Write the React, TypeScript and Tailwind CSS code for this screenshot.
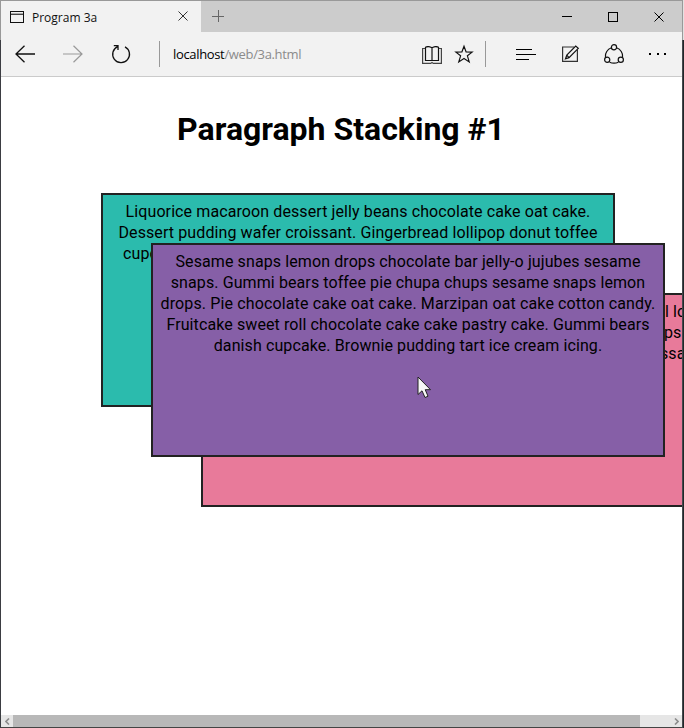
import React from "react";

function TabBar() {
  return (
    <div className="flex h-8 bg-[#cccccc] border-t border-[#999999]">
      <div className="flex w-[200px] items-center bg-[#f2f2f2]">
        <svg className="ml-[9px] shrink-0" width="14" height="12" shapeRendering="crispEdges" fill="none">
          <rect x="0.5" y="0.5" width="13" height="11" stroke="#111" />
          <path d="M1 2.5H13" stroke="#aaa" />
          <path d="M1 3.5H13" stroke="#444" />
        </svg>
        <span className="ml-2 mt-[2px] w-[146px] whitespace-nowrap font-['Open_Sans','Noto_Sans',sans-serif] text-[12px] leading-4 text-[#111]">
          Program 3a
        </span>
        <svg className="mb-px" width="10" height="10" stroke="#333" fill="none">
          <path d="M.5 .5L9.5 9.5M9.5 .5L.5 9.5" />
        </svg>
      </div>
      <div className="flex flex-1 items-center">
        <svg className="mb-px ml-[11px]" width="12" height="12" stroke="#666" fill="none" shapeRendering="crispEdges">
          <path d="M0 6.5H12M6.5 0V12" />
        </svg>
      </div>
      <div className="flex items-center">
        <svg className="mr-9" width="10" height="11" stroke="#000" shapeRendering="crispEdges">
          <path d="M0 5.5H10" />
        </svg>
        <svg className="mr-9" width="10" height="10" fill="none" stroke="#000" shapeRendering="crispEdges">
          <rect x=".5" y=".5" width="9" height="9" />
        </svg>
        <svg className="mr-[18px]" width="10" height="10" stroke="#000" fill="none">
          <path d="M.5 .5L9.5 9.5M9.5 .5L.5 9.5" />
        </svg>
      </div>
    </div>
  );
}

function Toolbar() {
  return (
    <div className="flex h-[45px] items-center border-b border-[#cbcbcb] bg-[#f2f2f2]">
      <svg className="ml-[14px]" width="20" height="18" fill="none" stroke="#111" strokeWidth="1.3">
        <path d="M20 9H1M9.5 .7L1 9L9.5 17.3" />
      </svg>
      <svg className="ml-7" width="20" height="18" fill="none" stroke="#999" strokeWidth="1.2">
        <path d="M0 9H19M10.5 .7L19 9L10.5 17.3" />
      </svg>
      <svg className="ml-7" width="20" height="20" fill="none" stroke="#111" strokeWidth="1.3">
        <path d="M14 2.8A8.4 8.4 0 1 1 6.600 2.600M2.800 1.700H7V5.900" />
      </svg>
      <div className="ml-7 h-[26px] w-px bg-[#999]" />
      <div className="ml-[13px] w-[249px] whitespace-nowrap font-['Open_Sans','Noto_Sans',sans-serif] text-[13px] leading-5 tracking-[-0.34px] text-black">
        localhost<span className="text-[#8b8b8b]">/web/3a.html</span>
      </div>
      <svg className="mt-px" width="20" height="18" fill="none" stroke="#111" strokeWidth="1.2">
        <path d="M10 1.800Q6.500 -.4 3.500 1.300V14.500H16.500V1.300Q13.500 -.4 10 1.800V14.500" />
        <path d="M3 2.500H.6V17.400H8.700L10 16.500L11.300 17.400H19.400V2.500H17" stroke="#444" />
      </svg>
      <svg className="ml-3" width="20" height="20" fill="none" stroke="#111" strokeWidth="1.2">
        <path d="M10 2.200L12.100 8L18.100 8.100L13.400 11.800L15.200 17.900L10 14.500L4.800 17.900L6.600 11.800L1.900 8.100L7.900 8Z" />
      </svg>
      <div className="ml-[11px] h-[26px] w-px bg-[#999]" />
      <svg className="mb-px ml-[30px]" width="20" height="12" fill="none" stroke="#000" shapeRendering="crispEdges">
        <path d="M0 1.500H16M0 6.500H20M0 11.500H13" />
      </svg>
      <svg className="ml-[26px]" width="18" height="18" fill="none" stroke="#111" strokeWidth="1.2">
        <path d="M12 2H.6V16.400H15.400V5" stroke="#333" />
        <path d="M3.500 13.700L4.800 10.200L13.700 1L16.300 3.300L7 12.600ZM4.800 10.200L7 12.600" />
      </svg>
      <svg className="ml-6" width="20" height="20" fill="none" stroke="#111" strokeWidth="1.2">
        <circle cx="10" cy="3.300" r="2.600" />
        <circle cx="3.200" cy="15.700" r="2.600" />
        <circle cx="16.800" cy="15.700" r="2.600" />
        <path d="M7.500 3.800A8.700 8.700 0 0 0 1.600 13.500M12.500 3.800A8.700 8.700 0 0 1 18.400 13.500M5.600 18.200Q10 20 14.400 18.200" />
      </svg>
      <svg className="ml-[25px]" width="18" height="2" fill="#000" shapeRendering="crispEdges">
        <path d="M0 0H2V2H0ZM8 0H10V2H8ZM15 0H17V2H15Z" />
      </svg>
    </div>
  );
}

const box = "absolute h-[214px] w-[514px] border-2 border-[#222] pt-[6px] text-center whitespace-nowrap";

function Page() {
  return (
    <div className="relative h-[638px] overflow-hidden bg-white font-['Roboto',sans-serif] text-[16px] leading-[21px] tracking-[0.1px] text-black">
      <h1 className="pr-px pt-[31px] text-center text-[32px] font-bold leading-[42px] tracking-normal">Paragraph Stacking #1</h1>
      <div className={`${box} left-[100px] top-[116px] bg-[#2bbbad]`}>
        <div>Liquorice macaroon dessert jelly beans chocolate cake oat cake.</div>
        <div>Dessert pudding wafer croissant. Gingerbread lollipop donut toffee</div>
        <div className="pl-5 text-left">cupc</div>
      </div>
      <div className={`${box} left-[200px] top-[216px] bg-[#e87a9a]`}>
        <div className="pl-[462px] text-left">l lo</div>
        <div className="pl-[461px] text-left">ps</div>
        <div className="pl-[457px] text-left">ssa</div>
      </div>
      <div className={`${box} left-[150px] top-[166px] bg-[#865fa7]`}>
        <div>Sesame snaps lemon drops chocolate bar jelly-o jujubes sesame</div>
        <div>snaps. Gummi bears toffee pie chupa chups sesame snaps lemon</div>
        <div className="tracking-[0.13px]">drops. Pie chocolate cake oat cake. Marzipan oat cake cotton candy.</div>
        <div>Fruitcake sweet roll chocolate cake cake pastry cake. Gummi bears</div>
        <div>danish cupcake. Brownie pudding tart ice cream icing.</div>
      </div>
      <svg className="absolute left-[416px] top-[299px]" width="15" height="24" viewBox="0 0 15 24">
        <path d="M1 1V18.500L5 14.800L8 21.500L11 20.200L8.200 13.700H13.500Z" fill="#f7f7f7" stroke="#222" />
      </svg>
    </div>
  );
}

function ScrollBar() {
  return (
    <div className="flex h-3 items-center bg-[#e6e6e6]">
      <svg className="ml-1" width="5" height="7" fill="none" stroke="#8c8c8c" strokeWidth="1.6">
        <path d="M4 .5L1 3.500L4 6.500" />
      </svg>
      <div className="ml-[3px] h-3 w-[627px] bg-[#b8b8b8]" />
      <svg className="ml-[34px]" width="5" height="7" fill="none" stroke="#8c8c8c" strokeWidth="1.6">
        <path d="M1 .5L4 3.500L1 6.500" />
      </svg>
    </div>
  );
}

export default function App() {
  return (
    <div className="flex h-[728px] w-[684px] overflow-hidden">
      <div className="flex w-px flex-col">
        <div className="h-10 bg-[#999]" />
        <div className="flex-1 bg-[#3b3d42]" />
      </div>
      <div className="flex w-[681px] flex-col">
        <TabBar />
        <Toolbar />
        <Page />
        <ScrollBar />
        <div className="h-px bg-[#444]" />
      </div>
      <div className="flex w-[2px] flex-col">
        <div className="flex h-10">
          <div className="w-px bg-[#999]" />
          <div className="w-px bg-[#e2e2e2]" />
        </div>
        <div className="flex flex-1">
          <div className="w-px bg-[#45494d]" />
          <div className="w-px bg-[#20272a]" />
        </div>
      </div>
    </div>
  );
}
